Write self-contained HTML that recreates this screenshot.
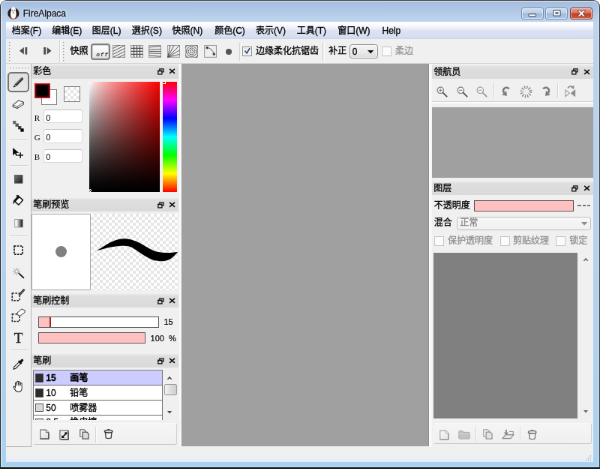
<!DOCTYPE html>
<html><head><meta charset="utf-8"><title>FireAlpaca</title>
<style>
html,body{margin:0;padding:0;background:#fff;}
body{width:600px;height:469px;overflow:hidden;position:relative;font-family:"Liberation Sans","Noto Sans CJK SC",sans-serif;}
#w{position:absolute;left:0;top:0;width:800px;height:625.33px;transform:scale(0.75);transform-origin:0 0;overflow:hidden;will-change:transform;}
#w div{position:absolute;box-sizing:border-box;}
#w svg{position:absolute;overflow:visible;}
#w .t{white-space:nowrap;-webkit-text-stroke:0.3px currentColor;}
#w .t span{display:inline-block;vertical-align:top;}
#w .t span.jp{font-family:"Liberation Sans","Noto Sans CJK JP",sans-serif;}

.tb{background:linear-gradient(#e9e9e9 0,#dedede 18%,#dadada 100%);}
.pn{background:#f0f0f0;}
.grp{background:linear-gradient(#f5f5f5,#f0f0f0);border:1.3px solid;border-color:#f9f9f9 #cfcfcf #c6c6c6 #f4f4f4;border-radius:3px;}
.inp{background:#fff;border:1px solid #d9d9d9;border-top-color:#c4c4c4;border-radius:3px;}
.cb{background:linear-gradient(135deg,#e2e4e8,#fafafa);border:1px solid #8e8f8f;box-shadow:inset 0 0 0 1px #f4f4f4;}
.cbd{background:#fbfbfb;border:1px solid #c4c4c4;}
.chk{background-color:#fff;background-image:linear-gradient(45deg,#e6e6e6 25%,transparent 25%,transparent 75%,#e6e6e6 75%),linear-gradient(45deg,#e6e6e6 25%,transparent 25%,transparent 75%,#e6e6e6 75%);background-size:8px 8px;background-position:0 0,4px 4px;}

</style></head><body>
<div id="w">
<div style="left:0px;top:0px;width:800px;height:625.33px;background:linear-gradient(#a2bcdf 0,#b0c8e6 13px,#c0d5ed 29px,#bcd3ed 60px,#b7d1ec 50%,#acd2ef 96%,#a6d3f0 100%);border-radius:9px 9px 0 0;"></div>
<div style="left:0px;top:0px;width:800px;height:625.33px;border-radius:9px 9px 0 0;border:1px solid #555;border-top:1.6px solid #444;border-bottom:2px solid #1c1c1c;border-right:1.6px solid #3a3a3a;border-left:1.2px solid #2e2e2e;"></div>
<div style="left:1.07px;top:1.07px;width:797.33px;height:622.27px;border-radius:8px 8px 0 0;border:1px solid rgba(255,255,255,.75);border-bottom-color:rgba(255,255,255,.25);border-right-color:rgba(255,255,255,.35);"></div>
<svg style="left:9.73px;top:9.07px" width="15.73" height="16.8" viewBox="0 0 16 17"><ellipse cx="8" cy="9" rx="7.7" ry="7.7" fill="#2a1b17"/><path d="M1.4 12.4 Q3.4 16 8 16.7 Q12.6 16 14.6 12.4 Q11.6 14.4 8 13.4 Q4.4 14.4 1.4 12.4Z" fill="#b3512c"/><ellipse cx="8" cy="9.6" rx="3.9" ry="6.4" fill="#fff"/><ellipse cx="8" cy="3.6" rx="3.1" ry="3.2" fill="#fdfdfd"/><ellipse cx="8" cy="7.6" rx="1.4" ry="2" fill="#c8b8a6"/><circle cx="6.6" cy="4.6" r=".8" fill="#555"/><circle cx="9.4" cy="4.6" r=".8" fill="#555"/></svg>
<div class="t" style="left:30.67px;top:12.4px;color:#10131c;font-size:12px;line-height:13px;height:13px;text-shadow:0 0 6px #fff,0 0 3px rgba(255,255,255,.8);"><span>FireAlpaca</span></div>
<div style="left:694.93px;top:9.6px;width:30.13px;height:16.27px;background:linear-gradient(#cfdff1 0,#bcd0e8 45%,#a0bad9 50%,#b0c9e5 100%);border:1px solid #7790b3;border-radius:3px;box-shadow:inset 0 0 0 1px rgba(255,255,255,.5);"></div>
<div style="left:727.47px;top:9.6px;width:29.6px;height:16.27px;background:linear-gradient(#cfdff1 0,#bcd0e8 45%,#a0bad9 50%,#b0c9e5 100%);border:1px solid #7790b3;border-radius:3px;box-shadow:inset 0 0 0 1px rgba(255,255,255,.5);"></div>
<div style="left:760px;top:9.6px;width:30.4px;height:16.27px;background:linear-gradient(#e3a99b 0,#d4705b 45%,#bf3b22 50%,#d2603f 100%);border:1px solid #7c3a33;border-radius:3px;box-shadow:inset 0 0 0 1px rgba(255,255,255,.5);"></div>
<svg style="left:704.27px;top:17.73px" width="11.47" height="4.53" viewBox="0 0 12 5"><rect x=".7" y=".7" width="10.6" height="3.6" rx="1" fill="#fff" stroke="#4a5872" stroke-width="1.2"/></svg>
<svg style="left:736.53px;top:12.8px" width="10.93" height="8.8" viewBox="0 0 11 9"><rect x=".7" y=".7" width="9.6" height="7.6" rx="1" fill="#fff" stroke="#4a5872" stroke-width="1.2"/><rect x="3.4" y="3.2" width="4.2" height="2.8" fill="#5a6a86"/></svg>
<svg style="left:768.8px;top:13.07px" width="12.53" height="9.87" viewBox="0 0 13 10"><path d="M.8 .8 L4.4 .8 L6.5 3.1 L8.6 .8 L12.2 .8 L8.4 5 L12.2 9.2 L8.6 9.2 L6.5 6.9 L4.4 9.2 L.8 9.2 L4.6 5Z" fill="#fff" stroke="#6a2a22" stroke-width=".8" stroke-linejoin="round"/></svg>
<div style="left:8px;top:29.33px;width:782.93px;height:587.07px;background:#f0f0f0;"></div>
<div style="left:8px;top:29.33px;width:782.93px;height:22.27px;background:linear-gradient(#fff 0,#fbfcfe 18%,#e9edf8 42%,#dde3f3 52%,#d8dff1 86%,#cfd6e6 100%);"></div>
<div class="t" style="left:15.87px;top:35.07px;color:#000;font-size:12px;line-height:13px;height:13px;"><span>档案</span><span>(F)</span></div>
<div class="t" style="left:69.2px;top:35.07px;color:#000;font-size:12px;line-height:13px;height:13px;"><span>编辑</span><span>(E)</span></div>
<div class="t" style="left:122.8px;top:35.07px;color:#000;font-size:12px;line-height:13px;height:13px;"><span>图层</span><span>(L)</span></div>
<div class="t" style="left:175.87px;top:35.07px;color:#000;font-size:12px;line-height:13px;height:13px;"><span class="jp">選択</span><span>(S)</span></div>
<div class="t" style="left:229.47px;top:35.07px;color:#000;font-size:12px;line-height:13px;height:13px;"><span>快照</span><span>(N)</span></div>
<div class="t" style="left:286.13px;top:35.07px;color:#000;font-size:12px;line-height:13px;height:13px;"><span>颜色</span><span>(C)</span></div>
<div class="t" style="left:341.07px;top:35.07px;color:#000;font-size:12px;line-height:13px;height:13px;"><span>表示</span><span>(V)</span></div>
<div class="t" style="left:395.73px;top:35.07px;color:#000;font-size:12px;line-height:13px;height:13px;"><span>工具</span><span>(T)</span></div>
<div class="t" style="left:450.13px;top:35.07px;color:#000;font-size:12px;line-height:13px;height:13px;"><span>窗口</span><span>(W)</span></div>
<div class="t" style="left:509.6px;top:35.07px;color:#000;font-size:12px;line-height:13px;height:13px;"><span>Help</span></div>
<div style="left:8px;top:51.6px;width:782.93px;height:32.93px;background:#f0f0f0;border-bottom:1px solid #d4d4d4;"></div>
<div style="left:78.93px;top:53.33px;width:2.13px;height:29.33px;border-left:1px solid #d2d2d2;border-right:1px solid #fcfcfc;"></div>
<svg style="left:12.27px;top:56.4px" width="3" height="28"><rect x="0" y="0" width="2" height="2" fill="#fff"/><rect x="0" y="0" width="1.5" height="1.5" fill="#a4a4a4"/><rect x="0" y="4" width="2" height="2" fill="#fff"/><rect x="0" y="4" width="1.5" height="1.5" fill="#a4a4a4"/><rect x="0" y="8" width="2" height="2" fill="#fff"/><rect x="0" y="8" width="1.5" height="1.5" fill="#a4a4a4"/><rect x="0" y="12" width="2" height="2" fill="#fff"/><rect x="0" y="12" width="1.5" height="1.5" fill="#a4a4a4"/><rect x="0" y="16" width="2" height="2" fill="#fff"/><rect x="0" y="16" width="1.5" height="1.5" fill="#a4a4a4"/><rect x="0" y="20" width="2" height="2" fill="#fff"/><rect x="0" y="20" width="1.5" height="1.5" fill="#a4a4a4"/><rect x="0" y="24" width="2" height="2" fill="#fff"/><rect x="0" y="24" width="1.5" height="1.5" fill="#a4a4a4"/></svg>
<svg style="left:84.4px;top:56.4px" width="3" height="28"><rect x="0" y="0" width="2" height="2" fill="#fff"/><rect x="0" y="0" width="1.5" height="1.5" fill="#a4a4a4"/><rect x="0" y="4" width="2" height="2" fill="#fff"/><rect x="0" y="4" width="1.5" height="1.5" fill="#a4a4a4"/><rect x="0" y="8" width="2" height="2" fill="#fff"/><rect x="0" y="8" width="1.5" height="1.5" fill="#a4a4a4"/><rect x="0" y="12" width="2" height="2" fill="#fff"/><rect x="0" y="12" width="1.5" height="1.5" fill="#a4a4a4"/><rect x="0" y="16" width="2" height="2" fill="#fff"/><rect x="0" y="16" width="1.5" height="1.5" fill="#a4a4a4"/><rect x="0" y="20" width="2" height="2" fill="#fff"/><rect x="0" y="20" width="1.5" height="1.5" fill="#a4a4a4"/><rect x="0" y="24" width="2" height="2" fill="#fff"/><rect x="0" y="24" width="1.5" height="1.5" fill="#a4a4a4"/></svg>
<svg style="left:26.4px;top:63.33px" width="11.47" height="9.6" viewBox="0 0 11 9" preserveAspectRatio="none"><path d="M0 4.5 L5.6 0 L5.6 9Z" fill="#4c4c4c"/><rect x="7.2" y="0" width="2.6" height="9" fill="#4c4c4c"/></svg>
<svg style="left:57.07px;top:63.33px" width="11.47" height="9.6" viewBox="0 0 11 9" preserveAspectRatio="none"><path d="M11 4.5 L5.4 0 L5.4 9Z" fill="#4c4c4c"/><rect x="1.2" y="0" width="2.6" height="9" fill="#4c4c4c"/></svg>
<div class="t" style="left:93.6px;top:62.13px;color:#000;font-size:12px;line-height:13px;height:13px;"><span>快照</span></div>
<div style="left:121.33px;top:58.13px;width:25.33px;height:21.87px;background:linear-gradient(#fff,#f3f3f3 55%,#dedede);border:2.3px solid #808080;border-radius:4px;box-shadow:inset 0 0 0 1px #d4d4d4;"></div>
<div class="t" style="left:128.27px;top:68.27px;color:#3c3c3c;font-size:8px;line-height:9px;height:9px;font-weight:bold;font-family:'Liberation Mono',sans-serif;letter-spacing:.7px;-webkit-text-stroke:0;font-style:italic;"><span>off</span></div>
<svg style="overflow:hidden;left:149.6px;top:60.27px" width="17.07" height="16.8" viewBox="0 0 17 17"><rect x=".5" y=".5" width="16" height="16" fill="#eeeeee" stroke="#989898"/><g stroke="#505050" stroke-width=".95" fill="none"><path d="M.5 4.5 L16.5 -3.5"/><path d="M.5 8.5 L16.5 0.5"/><path d="M.5 12.5 L16.5 4.5"/><path d="M.5 16.5 L16.5 8.5"/><path d="M.5 20.5 L16.5 12.5"/><path d="M.5 24.5 L16.5 16.5"/></g></svg>
<svg style="overflow:hidden;left:174px;top:60.27px" width="17.07" height="16.8" viewBox="0 0 17 17"><rect x=".5" y=".5" width="16" height="16" fill="#eeeeee" stroke="#989898"/><g stroke="#505050" stroke-width=".95" fill="none"><path stroke-width="1.2" d="M4.5 .5 V16.5 M.5 4.5 H16.5"/><path stroke-width="1.2" d="M8.5 .5 V16.5 M.5 8.5 H16.5"/><path stroke-width="1.2" d="M12.5 .5 V16.5 M.5 12.5 H16.5"/></g></svg>
<svg style="overflow:hidden;left:197.6px;top:60.27px" width="17.07" height="16.8" viewBox="0 0 17 17"><rect x=".5" y=".5" width="16" height="16" fill="#eeeeee" stroke="#989898"/><g stroke="#505050" stroke-width=".95" fill="none"><path d="M.5 3 L16.5 1.5 M.5 6 L16.5 5.5 M.5 8.5 H16.5 M.5 11 L16.5 11.5 M.5 14 L16.5 15.5"/></g></svg>
<svg style="overflow:hidden;left:222.67px;top:60.27px" width="17.07" height="16.8" viewBox="0 0 17 17"><rect x=".5" y=".5" width="16" height="16" fill="#eeeeee" stroke="#989898"/><g stroke="#505050" stroke-width=".95" fill="none"><path d="M.5 16.5 L16.5 .5 M.5 16.5 L9 .5 M.5 16.5 L4 .5 M.5 16.5 L16.5 7 M.5 16.5 L16.5 12.5"/></g></svg>
<svg style="overflow:hidden;left:246.67px;top:60.27px" width="17.07" height="16.8" viewBox="0 0 17 17"><rect x=".5" y=".5" width="16" height="16" fill="#eeeeee" stroke="#989898"/><g stroke="#505050" stroke-width=".95" fill="none"><circle cx="8.5" cy="8.5" r="2"/><circle cx="8.5" cy="8.5" r="4.5"/><circle cx="8.5" cy="8.5" r="7"/><circle cx="8.5" cy="8.5" r="10"/></g></svg>
<svg style="overflow:hidden;left:271.73px;top:60.27px" width="17.07" height="16.8" viewBox="0 0 17 17"><rect x=".5" y=".5" width="16" height="16" fill="#eeeeee" stroke="#989898"/><g stroke="#505050" stroke-width=".95" fill="none"><path d="M3 3.5 Q10.5 3.5 13.5 12.5"/><circle cx="4" cy="3.8" r="1.3" fill="#222"/><circle cx="13.3" cy="12.3" r="1.3" fill="#222"/></g></svg>
<div style="left:300.8px;top:64.53px;width:8.27px;height:8.27px;background:#555;border-radius:50%;"></div>
<div style="left:319.47px;top:57.33px;width:2.13px;height:23.33px;border-left:1px solid #d0d0d0;border-right:1px solid #fcfcfc;"></div>
<div class="cb" style="left:323.47px;top:61.6px;width:12.93px;height:12.93px;"></div>
<svg style="left:325.33px;top:63.07px" width="9.6" height="9.87" viewBox="0 0 10 10"><path d="M1 5 L2.4 4.2 L4 6.6 L7.8 .6 L9.2 1.4 L4.3 9.4Z" fill="#2b3a72"/></svg>
<div class="t" style="left:340.93px;top:62.13px;color:#000;font-size:12px;line-height:13px;height:13px;"><span>边缘柔化抗锯齿</span></div>
<div style="left:430.4px;top:57.33px;width:2.13px;height:23.33px;border-left:1px solid #d0d0d0;border-right:1px solid #fcfcfc;"></div>
<div class="t" style="left:438.13px;top:62.13px;color:#000;font-size:12px;line-height:13px;height:13px;"><span>补正</span></div>
<div style="left:465.6px;top:58.93px;width:38.13px;height:19.2px;background:linear-gradient(#f4f4f4,#ebebeb 50%,#dcdcdc);border:1px solid #8c8c8c;border-radius:3.5px;box-shadow:inset 0 0 0 1px rgba(255,255,255,.7);"></div>
<div class="t" style="left:469.87px;top:62.53px;color:#000;font-size:12px;line-height:13px;height:13px;"><span>0</span></div>
<svg style="left:489.87px;top:66.53px" width="8.27" height="4.53" viewBox="0 0 8 4.4"><path d="M0 0 H8 L4 4.4Z" fill="#111"/></svg>
<div class="cbd" style="left:509.33px;top:61.6px;width:12.93px;height:12.93px;"></div>
<div class="t" style="left:526.93px;top:62.13px;color:#959595;font-size:12px;line-height:13px;height:13px;"><span>柔边</span></div>
<div style="left:242.4px;top:85.2px;width:329.6px;height:510.8px;background:#a0a0a0;border-right:1.3px solid #8d8d8d;"></div>
<div style="left:238.93px;top:85.33px;width:1.87px;height:510.13px;background:#fafafa;"></div>
<div style="left:42.4px;top:594.67px;width:198.93px;height:1.6px;background:#fafafa;"></div>
<div style="left:8px;top:595.47px;width:782.93px;height:20.93px;background:linear-gradient(#f0f0f0 0,#f0f0f0 55%,#eaeff7 85%,#e2eaf6 100%);"></div>
<svg style="left:780.8px;top:606.67px" width="7.47" height="7.47" viewBox="0 0 8 8" fill="#b8b8b8"><rect x="6" y="0" width="1.6" height="1.6"/><rect x="3" y="3" width="1.6" height="1.6"/><rect x="6" y="3" width="1.6" height="1.6"/><rect x="0" y="6" width="1.6" height="1.6"/><rect x="3" y="6" width="1.6" height="1.6"/><rect x="6" y="6" width="1.6" height="1.6"/></svg>
<div style="left:8px;top:85.2px;width:34.4px;height:510.53px;border-right:1.2px solid #b4b4b4;border-bottom:1.2px solid #b4b4b4;"></div>
<svg style="left:12.8px;top:89.87px" width="28" height="3"><rect x="0" y="0" width="2" height="2" fill="#fff"/><rect x="0" y="0" width="1.5" height="1.5" fill="#a4a4a4"/><rect x="4" y="0" width="2" height="2" fill="#fff"/><rect x="4" y="0" width="1.5" height="1.5" fill="#a4a4a4"/><rect x="8" y="0" width="2" height="2" fill="#fff"/><rect x="8" y="0" width="1.5" height="1.5" fill="#a4a4a4"/><rect x="12" y="0" width="2" height="2" fill="#fff"/><rect x="12" y="0" width="1.5" height="1.5" fill="#a4a4a4"/><rect x="16" y="0" width="2" height="2" fill="#fff"/><rect x="16" y="0" width="1.5" height="1.5" fill="#a4a4a4"/><rect x="20" y="0" width="2" height="2" fill="#fff"/><rect x="20" y="0" width="1.5" height="1.5" fill="#a4a4a4"/><rect x="24" y="0" width="2" height="2" fill="#fff"/><rect x="24" y="0" width="1.5" height="1.5" fill="#a4a4a4"/></svg>
<div style="left:9.87px;top:96.27px;width:29.6px;height:26.93px;background:linear-gradient(#e0e0e0,#e8e8e8);border:2px solid #747474;border-radius:5px;"></div>
<svg style="left:17.33px;top:101.87px" width="15.2" height="15.47" viewBox="0 0 16 16"><path d="M1 15 L2.8 10.6 L12 1.4 Q13 .6 14 1.6 L14.4 2 Q15.4 3 14.6 4 L5.4 13.2Z" fill="#343434"/><path d="M4.2 10.6 L12.6 2.2" stroke="#9a9a9a" stroke-width="1"/><path d="M1 15 L2 12.4 L3.6 14Z" fill="#000"/><path d="M2.8 10.6 L5.4 13.2 L3.6 14 L2 12.4Z" fill="#8a8a8a"/></svg>
<svg style="left:16.27px;top:132px" width="16.53" height="13.33" viewBox="0 0 17 14"><path d="M1 8.5 L9 2 L16 4.5 L16 7.5 L7.5 13 L1 11Z" fill="#fafafa" stroke="#444" stroke-width="1.1" stroke-linejoin="round"/><path d="M1 8.5 L7.5 10.5 L16 4.5 M7.5 10.5 V13" stroke="#555" stroke-width="1" fill="none"/></svg>
<svg style="left:17.33px;top:161.33px" width="14.67" height="14.67" viewBox="0 0 15 15"><rect x="0" y="0" width="4.4" height="4.4" fill="#6c6c6c"/><rect x="3.6" y="3.6" width="4.4" height="4.4" fill="#585858"/><rect x="7.2" y="7.2" width="4.4" height="4.4" fill="#3c3c3c"/><rect x="10.6" y="10.6" width="4.4" height="4.4" fill="#000"/></svg>
<div style="left:13.33px;top:185.6px;width:23.2px;height:1.6px;border-top:1px solid #d0d0d0;border-bottom:1px solid #fbfbfb;"></div>
<svg style="left:17.33px;top:196.53px" width="14.13" height="13.87" viewBox="0 0 14 14"><path d="M0 0 L0 10.4 L2.8 7.8 L4.6 11.2 L6.2 10.4 L4.4 7 L8.2 6.8Z" fill="#0a0a0a"/><path d="M10.2 6.4 V14 M6.4 10.2 H14" stroke="#111" stroke-width="1.5"/></svg>
<div style="left:13.33px;top:220px;width:23.2px;height:1.6px;border-top:1px solid #d0d0d0;border-bottom:1px solid #fbfbfb;"></div>
<svg style="left:18.93px;top:232.53px" width="11.47" height="11.73" viewBox="0 0 12 12"><defs><linearGradient id="gfr" x1="0" y1="0" x2="1" y2="1"><stop offset="0" stop-color="#7a7a7a"/><stop offset="1" stop-color="#1a1a1a"/></linearGradient></defs><rect x=".5" y=".5" width="11" height="11" fill="url(#gfr)" stroke="#555"/></svg>
<svg style="left:16.8px;top:259.73px" width="14.67" height="14.13" viewBox="0 0 15 14"><path d="M7.4 1.2 L13.8 6.6 L8.2 13.2 L1.8 7.8Z" fill="#fcfcfc" stroke="#111" stroke-width="1.5" stroke-linejoin="round"/><path d="M7.4 1.2 L1.8 7.8 L3.6 9.2 L9.4 2.8Z" fill="#111"/><path d="M1.6 7 Q-.2 9.6 .8 12.6 Q2.4 10.6 3 8Z" fill="#111"/><path d="M4.6 1.2 Q6.6 -.6 8.6 1.6" fill="none" stroke="#111" stroke-width="1.2"/></svg>
<svg style="left:18.67px;top:291.73px" width="12" height="11.47" viewBox="0 0 12 12"><defs><linearGradient id="ggr" x1="0" y1="0" x2="1" y2="0"><stop offset="0" stop-color="#fff"/><stop offset=".25" stop-color="#eee"/><stop offset="1" stop-color="#0a0a0a"/></linearGradient></defs><rect x=".5" y=".5" width="11" height="11" fill="url(#ggr)" stroke="#8a8a8a" stroke-width=".8"/></svg>
<div style="left:13.33px;top:313.6px;width:23.2px;height:1.6px;border-top:1px solid #d0d0d0;border-bottom:1px solid #fbfbfb;"></div>
<svg style="left:17.87px;top:327.2px" width="13.07" height="13.07" viewBox="0 0 13 13"><rect x="1" y="1" width="11" height="11" fill="#f2f2f2" stroke="#111" stroke-width="1.7" stroke-dasharray="2.4 1.4"/></svg>
<svg style="left:17.33px;top:356.53px" width="16" height="14.67" viewBox="0 0 16 15"><path d="M7.5 7 L15 14" stroke="#222" stroke-width="2"/><path d="M5 0 V10 M0 5 H10 M1.5 1.5 L8.5 8.5 M8.5 1.5 L1.5 8.5" stroke="#888" stroke-width=".9"/><circle cx="5" cy="5" r="1.4" fill="#fff"/></svg>
<svg style="left:14.67px;top:384px" width="18.93" height="17.87" viewBox="0 0 19 18"><rect x="1.2" y="7" width="10" height="9.8" fill="none" stroke="#222" stroke-width="1.5" stroke-dasharray="2.6 1.6"/><path d="M10 8.6 L16.6 1.2 L18.2 2.8 L11.6 10.2Z" fill="#555" stroke="#222" stroke-width=".8"/></svg>
<svg style="left:14.67px;top:411.47px" width="18.93" height="18.67" viewBox="0 0 19 19"><rect x="1.2" y="8" width="10" height="9.8" fill="none" stroke="#222" stroke-width="1.5" stroke-dasharray="2.6 1.6"/><path d="M8 6.2 L14 1 L18.4 3 L18.4 5.4 L12 10.4 L8 8.8Z" fill="#fafafa" stroke="#333" stroke-width="1"/></svg>
<div class="t" style="left:18.67px;top:440.8px;color:#222;font-size:19px;line-height:20px;height:20px;font-family:'Liberation Serif',sans-serif;-webkit-text-stroke:.35px #222;"><span>T</span></div>
<div style="left:13.33px;top:466.4px;width:23.2px;height:1.6px;border-top:1px solid #d0d0d0;border-bottom:1px solid #fbfbfb;"></div>
<svg style="left:17.07px;top:478.13px" width="15.47" height="14.93" viewBox="0 0 16 15"><path d="M1 14.4 L2 11.2 L8.6 4.6 L10.8 6.8 L4.2 13.4Z" fill="#f4f4f4" stroke="#222" stroke-width="1.1"/><path d="M8 3 L12 7" stroke="#111" stroke-width="2.2"/><path d="M10.4 4.8 L13 2.2" stroke="#111" stroke-width="3.4" stroke-linecap="round"/></svg>
<svg style="left:17.33px;top:507.2px" width="15.2" height="16.27" viewBox="0 0 15 16"><path d="M3.4 9.5 L3.4 3.4 Q4.4 2.2 5.2 3.4 L5.4 7 L5.6 1.8 Q6.6 .6 7.4 1.8 L7.6 7 L8 2.4 Q9 1.2 9.8 2.4 L9.8 7.4 L10.4 4.2 Q11.4 3.2 12 4.4 L12 11 Q11.6 15.2 7.6 15.2 Q4.6 15.2 2.8 12.2 L.8 8.8 Q1.4 7.4 2.6 8.4Z" fill="#fdfdfd" stroke="#333" stroke-width="1"/></svg>
<div class="tb" style="left:42.13px;top:85.87px;width:196px;height:18.67px;"></div><div class="t" style="left:44.27px;top:88.93px;color:#000;font-size:12px;line-height:13px;height:13px;"><span>彩色</span></div><svg style="left:209.6px;top:90.8px" width="8.8" height="8.8" viewBox="0 0 10 10"><path d="M3.2 3 V.9 H9.1 V5.6 H7" fill="none" stroke="#111" stroke-width="1.5"/><rect x=".9" y="3.6" width="5.8" height="5.4" fill="none" stroke="#111" stroke-width="1.5"/><path d="M.9 4.3 H6.7" stroke="#111" stroke-width="1.4"/></svg><svg style="left:224.93px;top:91.47px" width="9.07" height="7.73" viewBox="0 0 10 9"><path d="M1 1 L9 8 M9 1 L1 8" stroke="#111" stroke-width="1.9"/></svg>
<div style="left:54.67px;top:119.47px;width:21.07px;height:20.27px;background:#fff;border:1.4px solid #7c7c7c;"></div>
<div style="left:46.4px;top:110.67px;width:20.8px;height:20.53px;background:#000;border:1.3px solid #e0202a;box-shadow:inset 0 0 3px 1px rgba(200,20,30,.75);"></div>
<div class="chk" style="left:85.33px;top:115.2px;width:21.6px;height:20.8px;border:1.3px solid #7c7c7c;"></div>
<div class="t" style="left:45.87px;top:150.8px;color:#000;font-size:11px;line-height:12px;height:12px;font-family:'Liberation Serif',sans-serif;-webkit-text-stroke:0;"><span>R</span></div>
<div class="inp" style="left:58.4px;top:146.27px;width:51.73px;height:18.13px;"></div>
<div class="t" style="left:61.33px;top:150.8px;color:#000;font-size:11px;line-height:12px;height:12px;-webkit-text-stroke:0;"><span>0</span></div>
<div class="t" style="left:45.87px;top:176.93px;color:#000;font-size:11px;line-height:12px;height:12px;font-family:'Liberation Serif',sans-serif;-webkit-text-stroke:0;"><span>G</span></div>
<div class="inp" style="left:58.4px;top:172.4px;width:51.73px;height:18.13px;"></div>
<div class="t" style="left:61.33px;top:176.93px;color:#000;font-size:11px;line-height:12px;height:12px;-webkit-text-stroke:0;"><span>0</span></div>
<div class="t" style="left:45.87px;top:203.07px;color:#000;font-size:11px;line-height:12px;height:12px;font-family:'Liberation Serif',sans-serif;-webkit-text-stroke:0;"><span>B</span></div>
<div class="inp" style="left:58.4px;top:198.53px;width:51.73px;height:18.13px;"></div>
<div class="t" style="left:61.33px;top:203.07px;color:#000;font-size:11px;line-height:12px;height:12px;-webkit-text-stroke:0;"><span>0</span></div>
<div style="left:118.93px;top:109.2px;width:94.13px;height:146.93px;background:linear-gradient(to bottom,rgba(0,0,0,0.000) 0%,rgba(0,0,0,0.062) 5%,rgba(0,0,0,0.123) 10%,rgba(0,0,0,0.243) 20%,rgba(0,0,0,0.360) 30%,rgba(0,0,0,0.472) 40%,rgba(0,0,0,0.580) 50%,rgba(0,0,0,0.682) 60%,rgba(0,0,0,0.778) 70%,rgba(0,0,0,0.866) 80%,rgba(0,0,0,0.944) 90%,rgba(0,0,0,1.000) 100%),linear-gradient(to right,rgb(255,255,255) 0%,rgb(252,228,228) 5%,rgb(252,210,210) 10%,rgb(252,180,180) 20%,rgb(252,153,153) 30%,rgb(252,128,128) 40%,rgb(252,105,105) 50%,rgb(252,83,83) 60%,rgb(252,62,62) 70%,rgb(252,42,42) 80%,rgb(252,22,22) 90%,rgb(252,4,4) 100%);"></div>
<div style="left:118.67px;top:251.73px;width:3.2px;height:4.67px;border:1px solid #fff;border-radius:50%;"></div>
<div style="left:216.8px;top:109.2px;width:19.2px;height:146.93px;background:linear-gradient(to bottom,#ff0000 0%,#ff00ff 16.6%,#0000ff 33.3%,#00ffff 50%,#00ff00 66.6%,#ffff00 83.3%,#ff0000 100%);"></div>
<div style="left:216px;top:108.27px;width:4.8px;height:4px;border:1px solid #fff;border-left-color:#ddd;"></div>
<div class="tb" style="left:42.13px;top:264px;width:196px;height:18.13px;"></div><div class="t" style="left:44.27px;top:267.07px;color:#000;font-size:12px;line-height:13px;height:13px;"><span>笔刷预览</span></div><svg style="left:209.6px;top:268.67px" width="8.8" height="8.8" viewBox="0 0 10 10"><path d="M3.2 3 V.9 H9.1 V5.6 H7" fill="none" stroke="#111" stroke-width="1.5"/><rect x=".9" y="3.6" width="5.8" height="5.4" fill="none" stroke="#111" stroke-width="1.5"/><path d="M.9 4.3 H6.7" stroke="#111" stroke-width="1.4"/></svg><svg style="left:224.93px;top:269.33px" width="9.07" height="7.73" viewBox="0 0 10 9"><path d="M1 1 L9 8 M9 1 L1 8" stroke="#111" stroke-width="1.9"/></svg>
<div style="left:42.4px;top:284.53px;width:78.13px;height:102px;background:#fff;border:1px solid #a8a8a8;border-radius:0 0 2px 2px;"></div>
<div style="left:74.27px;top:328.13px;width:14.93px;height:14.93px;background:#808080;border-radius:50%;"></div>
<div class="chk" style="left:120.53px;top:284.53px;width:117.6px;height:102.13px;"></div>
<svg style="left:125.33px;top:314.67px" width="109.33" height="42.67" viewBox="0 0 82 32"><path d="M2.8 14.5 C12 9 20 2.6 30 2.5 C40 2.6 46 7 51.3 9.7 C56 12.5 60 15 64.7 15.8 C71 16.8 78 16.5 84.1 15.5 C82 18 80 20 78 21.7 C75 24 71 25 67.3 24.9 C64 24.8 62 24.8 59.3 23.8 C54 21.5 50 19 46 16.3 C41 13 38 10 32.7 9.7 C28 9.5 25 9.8 22 10.2 C15 11 9 13 2.8 14.5Z" fill="#000"/></svg>
<div class="tb" style="left:42.13px;top:392.27px;width:196px;height:17.87px;"></div><div class="t" style="left:44.27px;top:395.33px;color:#000;font-size:12px;line-height:13px;height:13px;"><span>笔刷控制</span></div><svg style="left:209.6px;top:396.8px" width="8.8" height="8.8" viewBox="0 0 10 10"><path d="M3.2 3 V.9 H9.1 V5.6 H7" fill="none" stroke="#111" stroke-width="1.5"/><rect x=".9" y="3.6" width="5.8" height="5.4" fill="none" stroke="#111" stroke-width="1.5"/><path d="M.9 4.3 H6.7" stroke="#111" stroke-width="1.4"/></svg><svg style="left:224.93px;top:397.47px" width="9.07" height="7.73" viewBox="0 0 10 9"><path d="M1 1 L9 8 M9 1 L1 8" stroke="#111" stroke-width="1.9"/></svg>
<div style="left:50.93px;top:421.87px;width:160.8px;height:15.2px;background:#fff;border:1.3px solid #555;"></div>
<div style="left:52.27px;top:423.2px;width:13.6px;height:12.53px;background:#ffc0c0;"></div>
<div style="left:65.6px;top:422.93px;width:2.13px;height:13.07px;background:#a02828;"></div>
<div class="t" style="left:218.4px;top:423.47px;color:#000;font-size:11px;line-height:12px;height:12px;-webkit-text-stroke:.2px #000;"><span>15</span></div>
<div style="left:50.93px;top:443.2px;width:143.47px;height:15.2px;background:#ffc0c0;border:1.3px solid #555;"></div>
<div class="t" style="left:200.53px;top:444.8px;color:#000;font-size:11px;line-height:12px;height:12px;-webkit-text-stroke:.2px #000;word-spacing:3px;"><span>100&nbsp;%</span></div>
<div class="tb" style="left:42.13px;top:472px;width:196px;height:17.87px;"></div><div class="t" style="left:44.27px;top:475.07px;color:#000;font-size:12px;line-height:13px;height:13px;"><span>笔刷</span></div><svg style="left:209.6px;top:476.53px" width="8.8" height="8.8" viewBox="0 0 10 10"><path d="M3.2 3 V.9 H9.1 V5.6 H7" fill="none" stroke="#111" stroke-width="1.5"/><rect x=".9" y="3.6" width="5.8" height="5.4" fill="none" stroke="#111" stroke-width="1.5"/><path d="M.9 4.3 H6.7" stroke="#111" stroke-width="1.4"/></svg><svg style="left:224.93px;top:477.2px" width="9.07" height="7.73" viewBox="0 0 10 9"><path d="M1 1 L9 8 M9 1 L1 8" stroke="#111" stroke-width="1.9"/></svg>
<div style="left:44px;top:493.07px;width:172.53px;height:66.93px;background:#fff;border:1px solid #7a7a7a;border-bottom:none;"></div>
<div style="left:44.93px;top:494.13px;width:170.67px;height:20.27px;background:#ccccff;border-bottom:1px solid #606060;"></div>
<div style="left:46.8px;top:498.4px;width:11.07px;height:11.2px;background:#2c2c2c;border:1px solid #555;"></div>
<div class="t" style="left:61.33px;top:498.13px;color:#000;font-size:12px;line-height:13px;height:13px;font-weight:bold;"><span>15</span></div>
<div class="t" style="left:93.33px;top:498.13px;color:#000;font-size:12px;line-height:13px;height:13px;font-weight:bold;"><span>画笔</span></div>
<div style="left:44.93px;top:514.4px;width:170.67px;height:19.6px;border-bottom:1px solid #606060;"></div>
<div style="left:46.8px;top:518.33px;width:11.07px;height:11.2px;background:#2c2c2c;border:1px solid #555;"></div>
<div class="t" style="left:61.33px;top:518.07px;color:#000;font-size:12px;line-height:13px;height:13px;"><span>10</span></div>
<div class="t" style="left:93.33px;top:518.07px;color:#000;font-size:12px;line-height:13px;height:13px;"><span>铅笔</span></div>
<div style="left:44.93px;top:534px;width:170.67px;height:19.73px;border-bottom:1px solid #606060;"></div>
<div style="left:46.8px;top:538px;width:11.07px;height:11.2px;background:#d8d8d8;border:1px solid #555;"></div>
<div class="t" style="left:61.33px;top:537.73px;color:#000;font-size:12px;line-height:13px;height:13px;"><span>50</span></div>
<div class="t" style="left:93.33px;top:537.73px;color:#000;font-size:12px;line-height:13px;height:13px;"><span>喷雾器</span></div>
<div style="left:44.93px;top:553.73px;width:170.67px;height:19.6px;border-bottom:1px solid #606060;"></div>
<div style="left:46.8px;top:557.67px;width:11.07px;height:11.2px;background:#d8d8d8;border:1px solid #555;"></div>
<div class="t" style="left:61.33px;top:557.4px;color:#000;font-size:12px;line-height:13px;height:13px;"><span>8.5</span></div>
<div class="t" style="left:93.33px;top:557.4px;color:#000;font-size:12px;line-height:13px;height:13px;"><span>橡皮擦</span></div>
<div style="left:42.4px;top:560px;width:197.6px;height:16px;background:#f0f0f0;"></div>
<svg style="left:223.2px;top:501.6px" width="6.13" height="3.73" viewBox="0 0 8 4.6"><path d="M0 4.6 L4 0 L8 4.6 L6 4.6 L4 2.4 L2 4.6Z" fill="#444" stroke="#444" stroke-width=".6"/></svg>
<div style="left:218.67px;top:512.4px;width:17.07px;height:14.93px;background:linear-gradient(to right,#f4f4f4,#dedede 50%,#cfcfcf);border:1px solid #9a9a9a;border-radius:2px;"></div>
<svg style="left:223.2px;top:547.73px" width="6.13" height="3.73" viewBox="0 0 8 4.6"><path d="M0 0 L4 4.6 L8 0Z" fill="#4a4a4a"/></svg>
<div class="grp" style="left:44px;top:564.4px;width:191.73px;height:28.93px;"></div>
<svg style="left:53.33px;top:572.27px" width="12.53" height="14.13" viewBox="0 0 13 14"><defs><linearGradient id="gpg" x1="0" y1="0" x2="1" y2="1"><stop offset="0" stop-color="#fff"/><stop offset="1" stop-color="#dcdcdc"/></linearGradient></defs><path d="M.8 .8 H8.6 L12.2 4.4 V13.2 H.8Z" fill="url(#gpg)" stroke="#6a6a6a" stroke-width="1.2"/><path d="M12.4 4.4 V13.4 H.8" fill="none" stroke="#4a4a4a" stroke-width="1.3"/><path d="M8.6 .8 V4.4 H12.2" fill="#eee" stroke="#6a6a6a" stroke-width="1"/></svg>
<svg style="left:78.93px;top:572.53px" width="12.8" height="13.6" viewBox="0 0 13 14"><rect x=".8" y=".8" width="11.4" height="12.4" fill="#ececec" stroke="#666" stroke-width="1.2"/><path d="M12.4 2 V13.4 H2" fill="none" stroke="#444" stroke-width="1.3"/><path d="M4 10.4 L8.4 6" stroke="#111" stroke-width="1.6" fill="none"/><path d="M3.2 7.2 V11.2 H7.2Z" fill="#111"/><rect x="7.6" y="3.4" width="3" height="3" fill="#111"/></svg>
<svg style="left:105.87px;top:572.27px" width="12.8" height="14.13" viewBox="0 0 13 14"><path d="M.8 .8 H6.4 L8.6 3 V10 H.8Z" fill="#fafafa" stroke="#6a6a6a" stroke-width="1.2"/><path d="M4.2 4 H10 L12.2 6.2 V13.2 H4.2Z" fill="#dcdcdc" stroke="#555" stroke-width="1.3"/></svg>
<div style="left:127.47px;top:568.8px;width:1.87px;height:21.07px;border-left:1px solid #d4d4d4;border-right:1px solid #fcfcfc;"></div>
<svg style="left:137.6px;top:571.47px" width="13.33" height="14.67" viewBox="0 0 14 15"><path d="M2.4 4.6 L3.4 13.4 Q7 14.9 10.6 13.4 L11.6 4.6" fill="#f6f6f6" stroke="#444" stroke-width="1.4"/><ellipse cx="7" cy="4.2" rx="5.6" ry="1.9" fill="#e0e0e0" stroke="#333" stroke-width="1.4"/><path d="M5 2.6 Q7 .2 9 2.6" fill="none" stroke="#333" stroke-width="1.3"/></svg>
<div style="left:572px;top:85.2px;width:3.73px;height:510.8px;background:linear-gradient(to right,#fdfdfd,#fafafa 70%,#f0f0f0);"></div>
<div class="tb" style="left:576px;top:86.93px;width:214.93px;height:17.87px;"></div><div class="t" style="left:578.13px;top:90px;color:#000;font-size:12px;line-height:13px;height:13px;"><span>领航员</span></div><svg style="left:762.4px;top:91.47px" width="8.8" height="8.8" viewBox="0 0 10 10"><path d="M3.2 3 V.9 H9.1 V5.6 H7" fill="none" stroke="#111" stroke-width="1.5"/><rect x=".9" y="3.6" width="5.8" height="5.4" fill="none" stroke="#111" stroke-width="1.5"/><path d="M.9 4.3 H6.7" stroke="#111" stroke-width="1.4"/></svg><svg style="left:777.73px;top:92.13px" width="9.07" height="7.73" viewBox="0 0 10 9"><path d="M1 1 L9 8 M9 1 L1 8" stroke="#111" stroke-width="1.9"/></svg>
<div style="left:576px;top:106.67px;width:214.93px;height:29.6px;border-bottom:1px solid #cfcfcf;"></div>
<div style="left:576px;top:136.27px;width:214.93px;height:1.87px;background:#fbfbfb;"></div>
<svg style="left:582.13px;top:114.67px" width="14.67" height="14.67" viewBox="0 0 15 15"><circle cx="5.4" cy="5.4" r="4.3" fill="#f8f8f8" stroke="#777" stroke-width="1.2"/><path d="M8.6 8.6 L14 14" stroke="#555" stroke-width="1.9" stroke-linecap="round"/><path d="M3.2 5.4 H7.6" stroke="#777" stroke-width="1.1"/><path d="M5.4 3.2 V7.6" stroke="#777" stroke-width="1.1"/></svg>
<svg style="left:608.8px;top:114.67px" width="14.67" height="14.67" viewBox="0 0 15 15"><circle cx="5.4" cy="5.4" r="4.3" fill="#f8f8f8" stroke="#777" stroke-width="1.2"/><path d="M8.6 8.6 L14 14" stroke="#555" stroke-width="1.9" stroke-linecap="round"/><path d="M3.2 5.4 H7.6" stroke="#777" stroke-width="1.1"/></svg>
<svg style="left:635.2px;top:114.67px" width="14.67" height="14.67" viewBox="0 0 15 15"><circle cx="5.4" cy="5.4" r="4.3" fill="#f8f8f8" stroke="#9c9c9c" stroke-width="1.2"/><path d="M8.6 8.6 L14 14" stroke="#9c9c9c" stroke-width="1.9" stroke-linecap="round"/><path d="M3.2 5.4 H7.6" stroke="#9c9c9c" stroke-width="1.1"/></svg>
<div style="left:658.13px;top:111.2px;width:1.87px;height:20.27px;border-left:1px solid #d2d2d2;border-right:1px solid #fcfcfc;"></div>
<svg style="left:666.67px;top:113.33px" width="16" height="17.33" viewBox="0 0 12 13"><path d="M8.82 4.16 A3.2 3.2 0 1 0 3.94 8.26" fill="none" stroke="#7c7c7c" stroke-width="1.9"/><path d="M5.8 6.4 L2.1 10.1 L6.5 10.8Z" fill="#7c7c7c" stroke="#7c7c7c" stroke-width=".5" stroke-linejoin="round"/></svg>
<svg style="left:692.8px;top:113.87px" width="16.8" height="16.8" viewBox="0 0 15 15"><circle cx="7.5" cy="7.5" r="5.3" fill="none" stroke="#8a8a8a" stroke-width="3.6" stroke-dasharray="1.15 1.625"/></svg>
<svg style="left:720px;top:113.33px" width="16" height="17.33" viewBox="0 0 12 13"><path d="M3.18 4.16 A3.2 3.2 0 1 1 8.06 8.26" fill="none" stroke="#7c7c7c" stroke-width="1.9"/><path d="M6.2 6.4 L9.9 10.1 L5.5 10.8Z" fill="#7c7c7c" stroke="#7c7c7c" stroke-width=".5" stroke-linejoin="round"/></svg>
<div style="left:743.47px;top:111.2px;width:1.87px;height:20.27px;border-left:1px solid #d2d2d2;border-right:1px solid #fcfcfc;"></div>
<svg style="left:752.8px;top:112.8px" width="14.67" height="16.53" viewBox="0 0 15 17"><path d="M1 7 L6.4 11.6 L1 16Z" fill="#f4f4f4" stroke="#999" stroke-width="1.1"/><path d="M14 7 L8.6 11.6 L14 16Z" fill="#8e8e8e" stroke="#888" stroke-width="1"/><path d="M4 4.6 Q7.5 0 11 3.6" fill="none" stroke="#8e8e8e" stroke-width="1.7"/><path d="M12.8 .6 L12.6 5.8 L8.2 4Z" fill="#8e8e8e"/></svg>
<div style="left:576px;top:142.67px;width:214.93px;height:94.13px;background:#a0a0a0;"></div>
<div class="tb" style="left:576px;top:242.4px;width:214.93px;height:17.6px;"></div><div class="t" style="left:578.13px;top:245.47px;color:#000;font-size:12px;line-height:13px;height:13px;"><span>图层</span></div><svg style="left:762.4px;top:246.8px" width="8.8" height="8.8" viewBox="0 0 10 10"><path d="M3.2 3 V.9 H9.1 V5.6 H7" fill="none" stroke="#111" stroke-width="1.5"/><rect x=".9" y="3.6" width="5.8" height="5.4" fill="none" stroke="#111" stroke-width="1.5"/><path d="M.9 4.3 H6.7" stroke="#111" stroke-width="1.4"/></svg><svg style="left:777.73px;top:247.47px" width="9.07" height="7.73" viewBox="0 0 10 9"><path d="M1 1 L9 8 M9 1 L1 8" stroke="#111" stroke-width="1.9"/></svg>
<div class="t" style="left:578.67px;top:267.6px;color:#000;font-size:12px;line-height:13px;height:13px;"><span>不透明度</span></div>
<div style="left:632.27px;top:266.93px;width:132.8px;height:15.2px;background:#ffc0c0;border:1.3px solid #555;"></div>
<div style="left:770.4px;top:273.47px;width:4.53px;height:1.33px;background:#777;"></div>
<div style="left:776.53px;top:273.47px;width:4.53px;height:1.33px;background:#777;"></div>
<div style="left:782.67px;top:273.47px;width:4.53px;height:1.33px;background:#777;"></div>
<div class="t" style="left:578.67px;top:291.33px;color:#000;font-size:12px;line-height:13px;height:13px;"><span>混合</span></div>
<div style="left:608.53px;top:288.93px;width:179.73px;height:18.13px;background:linear-gradient(#f7f7f7,#f1f1f1);border:1px solid #bdbdbd;border-radius:3.5px;"></div>
<div class="t" style="left:613.33px;top:291.33px;color:#8a8a8a;font-size:12px;line-height:13px;height:13px;"><span>正常</span></div>
<svg style="left:774.67px;top:295.73px" width="8.27" height="4.53" viewBox="0 0 8 4.4"><path d="M0 0 H8 L4 4.4Z" fill="#8a8a8a"/></svg>
<div class="cbd" style="left:578.93px;top:315.07px;width:13.07px;height:12.93px;"></div>
<div class="t" style="left:597.07px;top:315.33px;color:#929292;font-size:12px;line-height:13px;height:13px;"><span>保护透明度</span></div>
<div class="cbd" style="left:666.93px;top:315.07px;width:13.07px;height:12.93px;"></div>
<div class="t" style="left:684px;top:315.33px;color:#929292;font-size:12px;line-height:13px;height:13px;"><span>剪贴纹理</span></div>
<div class="cbd" style="left:741.33px;top:315.07px;width:13.07px;height:12.93px;"></div>
<div class="t" style="left:759.2px;top:315.33px;color:#929292;font-size:12px;line-height:13px;height:13px;"><span>锁定</span></div>
<div style="left:577.6px;top:336.93px;width:192.8px;height:220.67px;background:#808080;"></div>
<svg style="left:777.6px;top:343.73px" width="6.13" height="3.73" viewBox="0 0 8 4.6"><path d="M0 4.6 L4 0 L8 4.6 L6 4.6 L4 2.4 L2 4.6Z" fill="#666" stroke="#666" stroke-width=".6"/></svg>
<svg style="left:777.6px;top:547.2px" width="6.13" height="3.73" viewBox="0 0 8 4.6"><path d="M0 0 L4 4.6 L8 0Z" fill="#666"/></svg>
<div class="grp" style="left:577.6px;top:564.27px;width:210.93px;height:27.73px;"></div>
<div style="left:0;top:0;opacity:.55"><svg style="left:585.6px;top:572.53px" width="12.53" height="14.13" viewBox="0 0 13 14"><defs><linearGradient id="gpg" x1="0" y1="0" x2="1" y2="1"><stop offset="0" stop-color="#fff"/><stop offset="1" stop-color="#dcdcdc"/></linearGradient></defs><path d="M.8 .8 H8.6 L12.2 4.4 V13.2 H.8Z" fill="url(#gpg)" stroke="#6a6a6a" stroke-width="1.2"/><path d="M12.4 4.4 V13.4 H.8" fill="none" stroke="#4a4a4a" stroke-width="1.3"/><path d="M8.6 .8 V4.4 H12.2" fill="#eee" stroke="#6a6a6a" stroke-width="1"/></svg></div>
<svg style="left:610.67px;top:573.87px" width="16" height="11.73" viewBox="0 0 16 12"><path d="M.6 1.6 Q.6 .6 1.6 .6 H5.6 L7.2 2.4 H14.4 Q15.4 2.4 15.4 3.4 V10.4 Q15.4 11.4 14.4 11.4 H1.6 Q.6 11.4 .6 10.4Z" fill="#c2c2c2" stroke="#aaa" stroke-width="1"/><path d="M.6 4.6 H15.4" stroke="#d8d8d8" stroke-width="1"/></svg>
<div style="left:634.13px;top:568.53px;width:1.87px;height:20.27px;border-left:1px solid #d4d4d4;border-right:1px solid #fcfcfc;"></div>
<div style="left:0;top:0;opacity:.6"><svg style="left:644.27px;top:572.27px" width="12.8" height="14.13" viewBox="0 0 13 14"><path d="M.8 .8 H6.4 L8.6 3 V10 H.8Z" fill="#fafafa" stroke="#6a6a6a" stroke-width="1.2"/><path d="M4.2 4 H10 L12.2 6.2 V13.2 H4.2Z" fill="#dcdcdc" stroke="#555" stroke-width="1.3"/></svg></div>
<svg style="left:668.8px;top:572px" width="16.8" height="14.13" viewBox="0 0 17 14"><path d="M1 12.6 L5 7.6 H16 L12 12.6Z" fill="#e6e6e6" stroke="#8a8a8a" stroke-width="1.1"/><path d="M6 .6 V5.4" stroke="#8a8a8a" stroke-width="2"/><path d="M2.8 4.4 H9.2 L6 8.4Z" fill="#8a8a8a"/><path d="M10 3.2 H15.4 V7" fill="none" stroke="#9a9a9a" stroke-width="1.2"/></svg>
<div style="left:692.8px;top:568.53px;width:1.87px;height:20.27px;border-left:1px solid #d4d4d4;border-right:1px solid #fcfcfc;"></div>
<div style="left:0;top:0;opacity:.7"><svg style="left:703.2px;top:571.73px" width="13.33" height="14.67" viewBox="0 0 14 15"><path d="M2.4 4.6 L3.4 13.4 Q7 14.9 10.6 13.4 L11.6 4.6" fill="#f6f6f6" stroke="#444" stroke-width="1.4"/><ellipse cx="7" cy="4.2" rx="5.6" ry="1.9" fill="#e0e0e0" stroke="#333" stroke-width="1.4"/><path d="M5 2.6 Q7 .2 9 2.6" fill="none" stroke="#333" stroke-width="1.3"/></svg></div>
</div>
</body></html>
